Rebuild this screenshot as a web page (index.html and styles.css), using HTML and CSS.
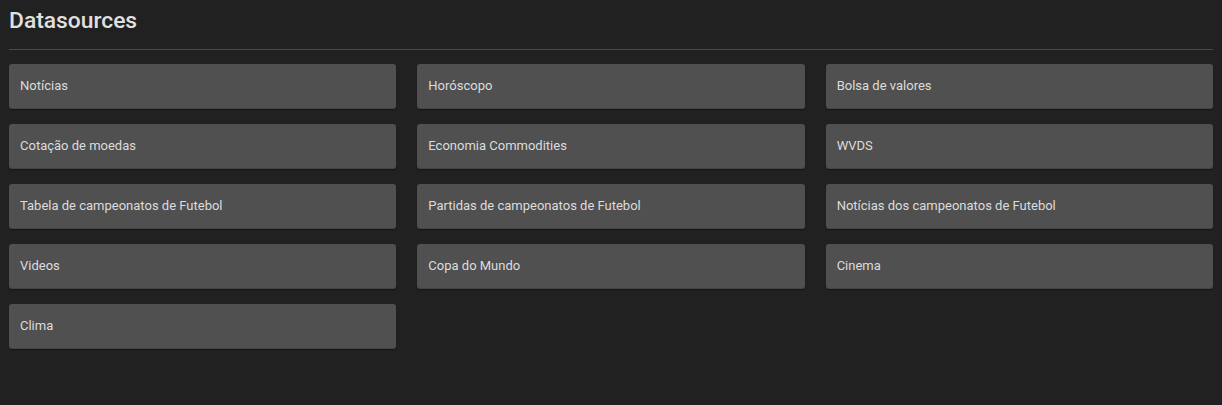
FILE: index.html
```html
<!DOCTYPE html>
<html>
<head>
<meta charset="utf-8">
<link rel="stylesheet" href="styles.css">
</head>
<body>
<div class="page">
  <h1 class="title">Datasources</h1>
  <hr class="divider">
  <div class="grid">
    <div class="card">Notícias</div>
    <div class="card">Horóscopo</div>
    <div class="card">Bolsa de valores</div>
    <div class="card">Cotação de moedas</div>
    <div class="card">Economia Commodities</div>
    <div class="card">WVDS</div>
    <div class="card">Tabela de campeonatos de Futebol</div>
    <div class="card">Partidas de campeonatos de Futebol</div>
    <div class="card">Notícias dos campeonatos de Futebol</div>
    <div class="card">Videos</div>
    <div class="card">Copa do Mundo</div>
    <div class="card">Cinema</div>
    <div class="card">Clima</div>
  </div>
</div>
</body>
</html>
```
FILE: styles.css
```css
html, body {
  margin: 0;
  padding: 0;
  background: #212121;
  height: 100%;
}
.page {
  padding: 0 9px;
  font-family: Roboto, "Liberation Sans", sans-serif;
  color: #e0e0e0;
}
.title {
  margin: 0;
  padding-top: 7px;
  font-size: 22.8px;
  font-weight: 500;
  line-height: 27px;
  color: #e0e0e0;
}
.divider {
  margin: 15px 0 14px;
  border: 0;
  height: 1px;
  background: #4a4a4a;
}
.grid {
  display: grid;
  grid-template-columns: repeat(3, 1fr);
  column-gap: 21px;
  row-gap: 15px;
}
.card {
  height: 45px;
  box-sizing: border-box;
  padding: 0 11px 1px;
  display: flex;
  align-items: center;
  background: #505050;
  border-radius: 3px;
  box-shadow: 0 1px 1px rgba(0,0,0,0.35);
  border-bottom: 1px solid #454545;
  font-size: 13px;
  color: #dcdcdc;
}
```
